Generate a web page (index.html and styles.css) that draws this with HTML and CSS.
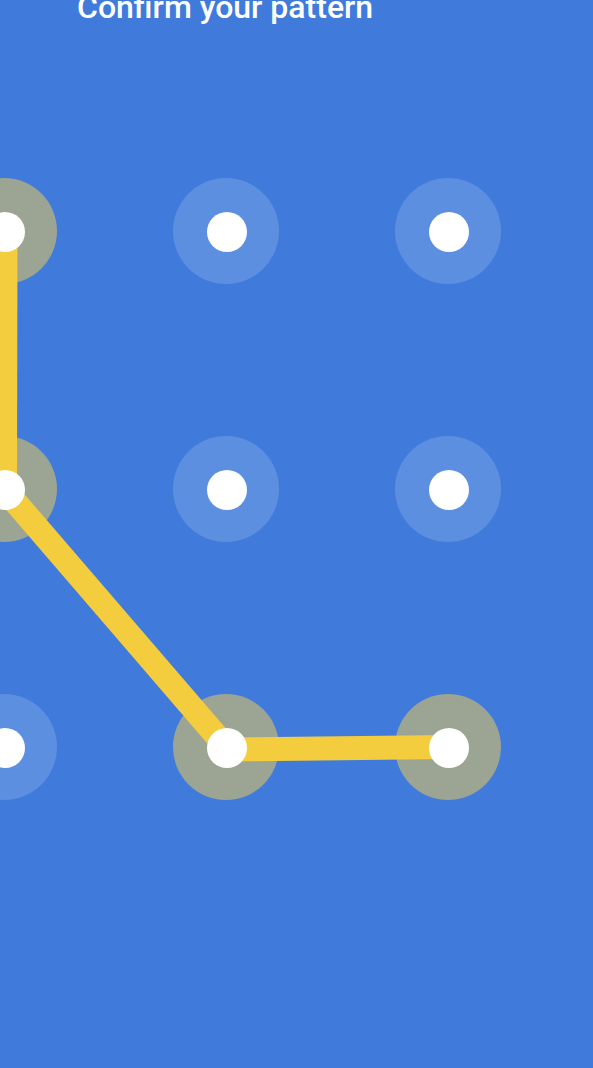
FILE: index.html
```html
<!DOCTYPE html>
<html lang="en">
<head>
<meta charset="utf-8">
<title>Confirm your pattern</title>
<link rel="stylesheet" href="styles.css">
</head>
<body>
<main class="screen">
  <h1 class="title">Confirm your pattern</h1>
  <div class="pattern">
    <svg class="pattern-svg" width="593" height="720" viewBox="0 0 593 720" xmlns="http://www.w3.org/2000/svg">
      <g class="ring">
        <circle cx="226" cy="100" r="53"/>
        <circle cx="448" cy="100" r="53"/>
        <circle cx="226" cy="358" r="53"/>
        <circle cx="448" cy="358" r="53"/>
        <circle cx="4" cy="616" r="53"/>
      </g>
      <g class="ring-on">
        <circle cx="4" cy="100" r="53"/>
        <circle cx="4" cy="358" r="53"/>
        <circle cx="226" cy="616" r="53"/>
        <circle cx="448" cy="616" r="53"/>
      </g>
      <g class="path">
        <line x1="5.5" y1="100" x2="5" y2="359"/>
        <line x1="5" y1="359" x2="227" y2="617"/>
        <line x1="227" y1="618.5" x2="449" y2="616"/>
      </g>
      <g class="dot">
        <circle cx="5" cy="101" r="20"/>
        <circle cx="227" cy="101" r="20"/>
        <circle cx="449" cy="101" r="20"/>
        <circle cx="5" cy="359" r="20"/>
        <circle cx="227" cy="359" r="20"/>
        <circle cx="449" cy="359" r="20"/>
        <circle cx="5" cy="617" r="20"/>
        <circle cx="227" cy="617" r="20"/>
        <circle cx="449" cy="617" r="20"/>
      </g>
    </svg>
  </div>
</main>
</body>
</html>
```

FILE: styles.css
```css
html, body {
  margin: 0;
  padding: 0;
  background: #407bdc;
  overflow: hidden;
}

.screen {
  width: 593px;
  height: 1068px;
  display: flex;
  flex-direction: column;
  font-family: Roboto, "Liberation Sans", sans-serif;
}

.title {
  margin: -9px 0 0 0;
  padding-left: 77px;
  font-size: 32px;
  line-height: 32px;
  font-weight: 500;
  color: #ffffff;
  white-space: nowrap;
}

.pattern {
  margin-top: 108px;
  display: block;
}

.pattern-svg {
  display: block;
}

.ring circle {
  fill: #5d8fe1;
}

.ring-on circle {
  fill: #9ca593;
}

.path line {
  stroke: #f4cd3e;
  stroke-width: 24;
  stroke-linecap: butt;
}

.dot circle {
  fill: #ffffff;
}
```
